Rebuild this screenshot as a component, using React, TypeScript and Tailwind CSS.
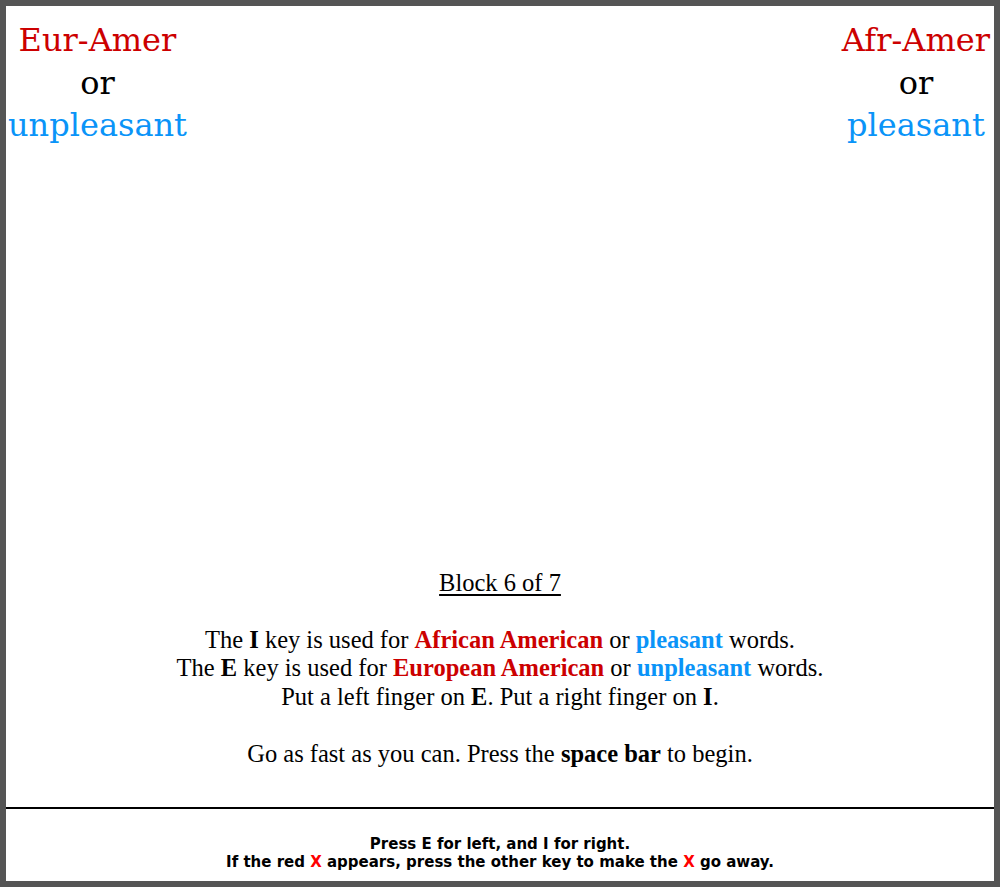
export default function App() {
  return (
    <div className="h-[887px] w-[1000px] border-[6px] border-[#555555] bg-white flex flex-col box-border">
      {/* category labels */}
      <div className="flex justify-between px-[2px] pt-[13px] font-['DejaVu_Serif','Liberation_Serif',serif] text-[32px] leading-[42.5px]">
        <div className="flex flex-col items-center">
          <span className="text-[#cc0000]">Eur-Amer</span>
          <span className="text-black">or</span>
          <span className="text-[#0a94f8]">unpleasant</span>
        </div>
        <div className="flex flex-col items-center pr-[2px]">
          <span className="text-[#cc0000]">Afr-Amer</span>
          <span className="text-black">or</span>
          <span className="text-[#0a94f8]">pleasant</span>
        </div>
      </div>

      <div className="flex-1" />

      {/* instructions */}
      <div className="text-center font-['Liberation_Serif',serif] text-[24.5px] leading-[28.5px] text-black pb-[39px]">
        <p className="underline underline-offset-[3px]">Block 6 of 7</p>
        <p>&nbsp;</p>
        <p>
          The <b>I</b> key is used for <b className="text-[#cc0000]">African American</b> or{" "}
          <b className="text-[#0a94f8]">pleasant</b> words.
        </p>
        <p>
          The <b>E</b> key is used for <b className="text-[#cc0000]">European American</b> or{" "}
          <b className="text-[#0a94f8]">unpleasant</b> words.
        </p>
        <p>
          Put a left finger on <b>E</b>. Put a right finger on <b>I</b>.
        </p>
        <p>&nbsp;</p>
        <p>
          Go as fast as you can. Press the <b>space bar</b> to begin.
        </p>
      </div>

      {/* footer */}
      <div className="border-t-2 border-black h-[74px] flex flex-col justify-center items-center pt-[15px] font-['DejaVu_Sans',sans-serif] font-bold text-[15px] leading-[18px] text-black">
        <p>Press E for left, and I for right.</p>
        <p>
          If the red <span className="text-[#ff0000]">X</span> appears, press the other key to make the{" "}
          <span className="text-[#ff0000]">X</span> go away.
        </p>
      </div>
    </div>
  );
}
